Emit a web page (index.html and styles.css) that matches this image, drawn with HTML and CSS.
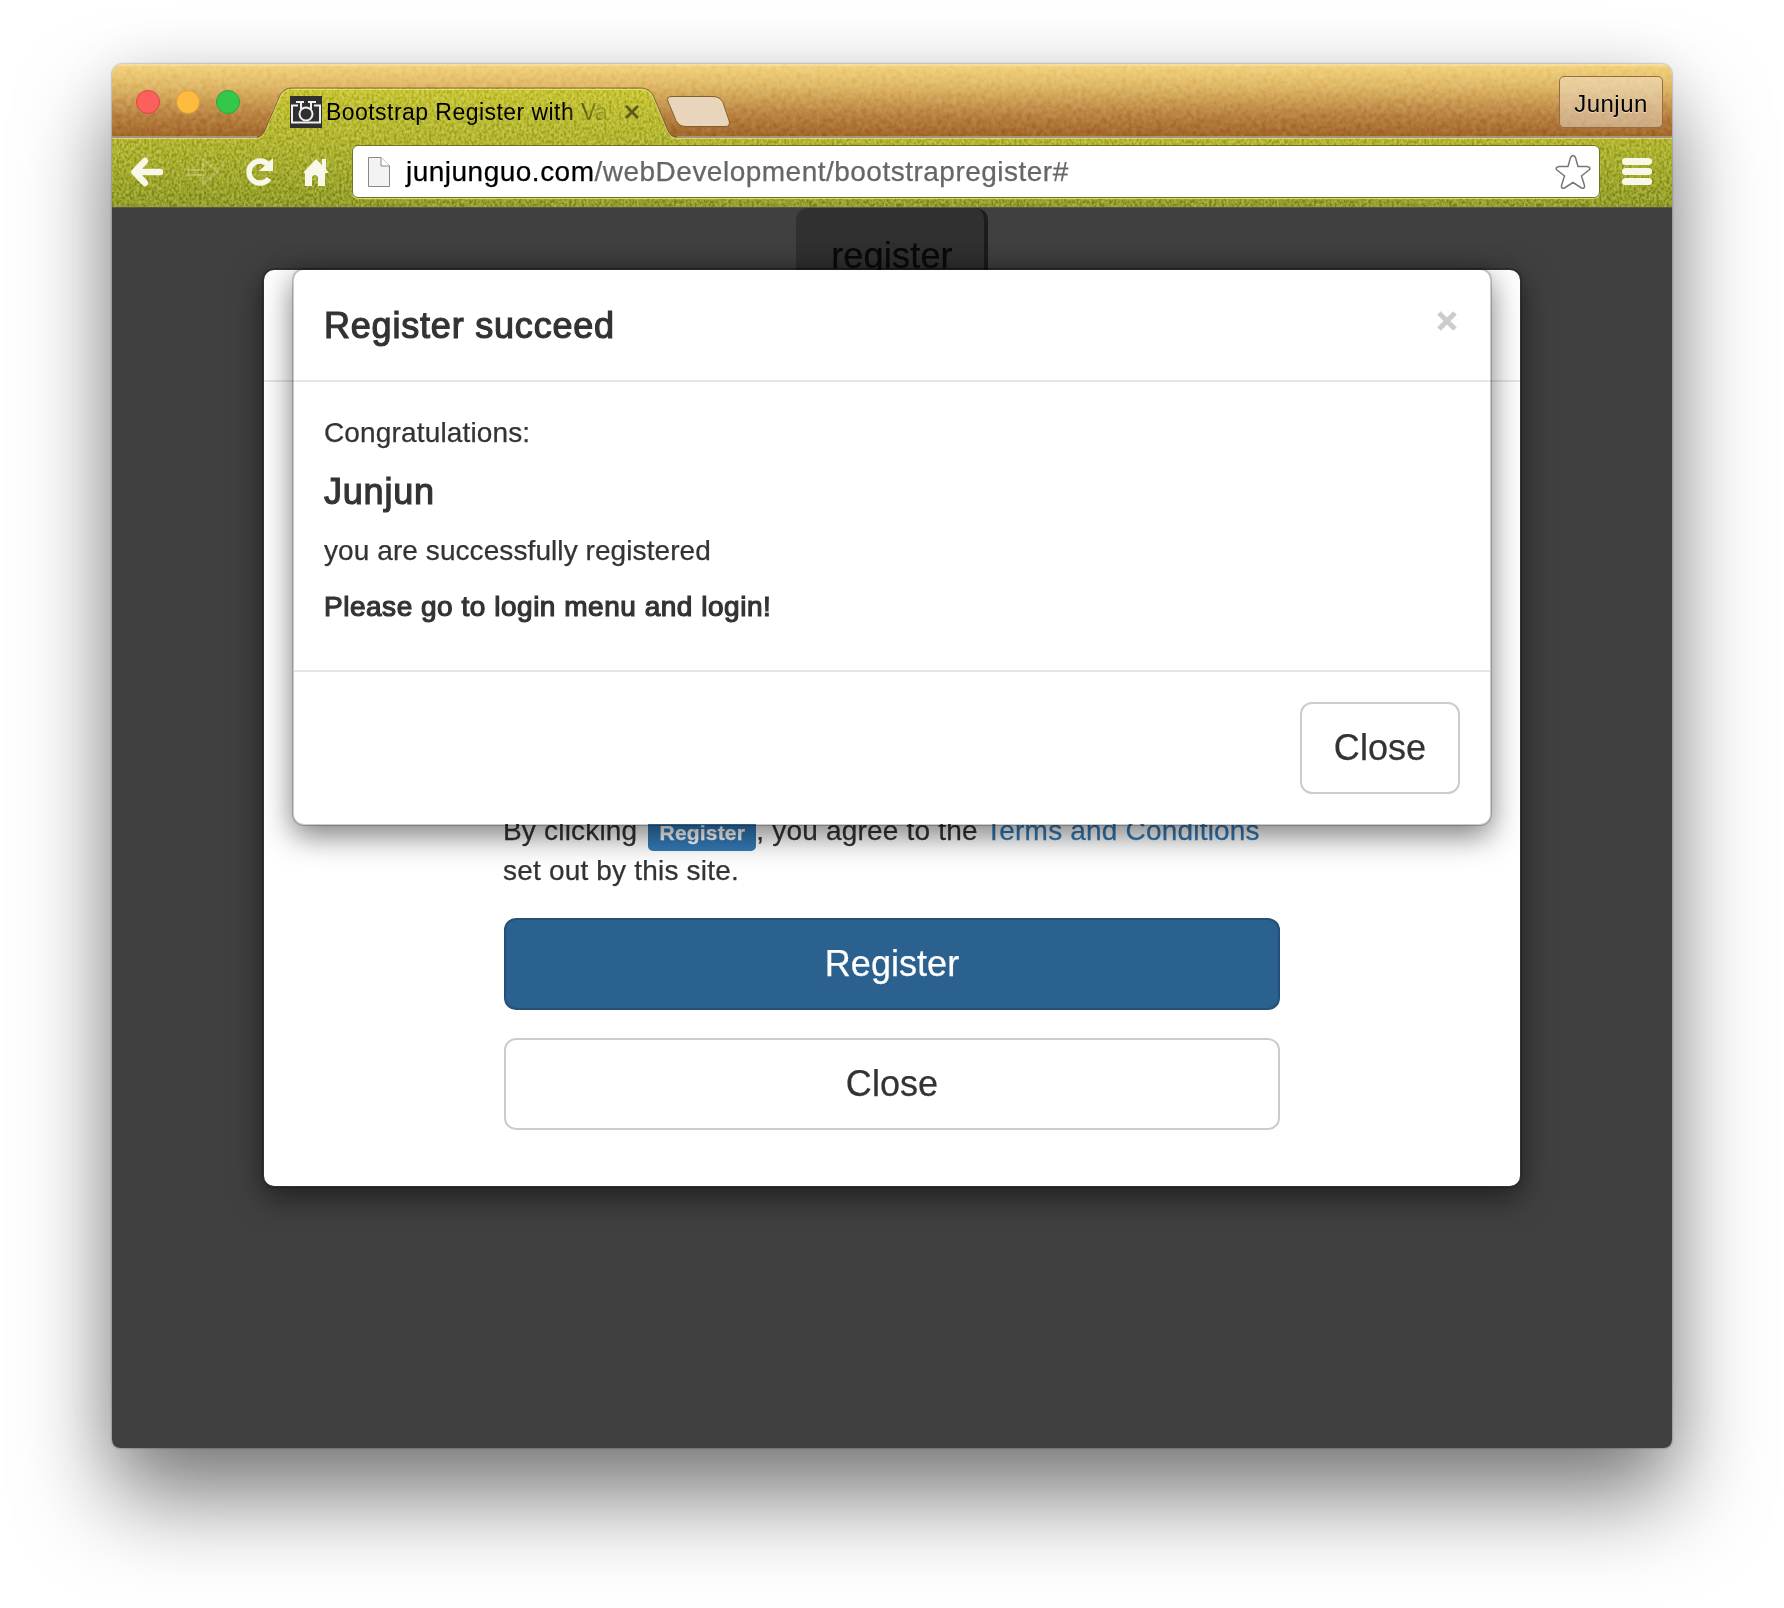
FILE: index.html
```
<!DOCTYPE html>
<html lang="en">
<head>
<meta charset="utf-8">
<title>Bootstrap Register with Validation</title>
<link rel="stylesheet" href="styles.css">
</head>
<body>
<div class="window">
  <header class="chrome">
    <svg class="chrome-skin" width="1560" height="143" viewBox="0 0 1560 143">
      <defs>
        <linearGradient id="wood" x1="0" y1="0" x2="0" y2="1"><stop offset="0" stop-color="#f4d47f"/><stop offset=".3" stop-color="#dfb867"/><stop offset=".7" stop-color="#b88140"/><stop offset="1" stop-color="#a06528"/></linearGradient>
        <linearGradient id="grass" x1="0" y1="20" x2="0" y2="143" gradientUnits="userSpaceOnUse"><stop offset="0" stop-color="#cac634"/><stop offset=".5" stop-color="#b0b42f"/><stop offset="1" stop-color="#929d27"/></linearGradient>
        <filter id="grain" x="0" y="0" width="100%" height="100%" color-interpolation-filters="sRGB"><feTurbulence type="fractalNoise" baseFrequency=".4 .3" numOctaves="2" seed="4"/><feColorMatrix values="2.2 0 0 0 -.6  2.2 0 0 0 -.6  2.2 0 0 0 -.6  0 0 0 0 1"/></filter>
        <filter id="fineGrain" x="0" y="0" width="100%" height="100%" color-interpolation-filters="sRGB"><feTurbulence type="fractalNoise" baseFrequency=".2" numOctaves="2" seed="9"/><feColorMatrix values="1.4 0 0 0 -.2  1.4 0 0 0 -.2  1.4 0 0 0 -.2  0 0 0 0 1"/></filter>
        <clipPath id="grassShape"><path d="M0 74H144Q150 74 153 67L168 32Q172 24 180 24H529Q537 24 541 32L556 68Q559 74 566 74H1560V143H0Z"/></clipPath>
      </defs>
      <rect width="1560" height="74" fill="url(#wood)"/>
      <rect class="grain-wood" width="1560" height="74" filter="url(#fineGrain)"/>
      <path d="M0 1H1560" stroke="#fbe9b4" stroke-width="1"/>
      <g clip-path="url(#grassShape)">
        <rect width="1560" height="143" fill="url(#grass)"/>
        <rect class="grain-grass" width="1560" height="143" filter="url(#grain)"/>
      </g>
      <path d="M0 74.500H144Q150 74.500 153 67.500L168 33Q172 25.500 180 25.500H529Q537 25.500 541 33L556 68.500Q559 74.500 566 74.500H1560" fill="none" stroke="#e9e6a0" stroke-opacity=".7"/>
      <path d="M144 73Q150 73 153 66.500L168 31Q172 24 180 24H529Q537 24 541 31L556 67Q559 73 566 73" fill="none" stroke="#6f5a20" stroke-opacity=".75"/>
      <path d="M0 73H145M565 73H1560" stroke="#a9a58c" stroke-width="1.500"/>
      <path d="M560 33H601Q608 33 611 39L617 57Q619 63 613 63H574Q567 63 564 57L556 38Q554 33 560 33Z" transform="translate(0 -.5)" fill="#e9d5bb" stroke="#80602e"/>
    </svg>
    <div class="titlebar">
      <div class="lights"><i class="light red"></i><i class="light amber"></i><i class="light green"></i></div>
      <div class="tab">
        <svg class="favicon" width="32" height="32" viewBox="0 0 32 32"><path fill="#303030" d="M0 0H32V32H0Z"/><g fill="none" stroke="#f1f1f1" stroke-width="2"><path d="M8 9.500H2V26.500H30V9.500H24M6 6H14M18 6H26M11 6V13M21 6V13"/><circle cx="16" cy="18" r="6.500"/></g></svg>
        <span class="tab-title">Bootstrap Register with Vali</span>
        <svg class="tab-close" width="14" height="14" viewBox="0 0 14 14"><path d="M1 1L13 13M13 1L1 13" stroke="#58581f" stroke-width="2.600"/></svg>
      </div>
      <div class="profile">Junjun</div>
    </div>
    <nav class="toolbar">
      <svg class="tools" width="240" height="54" viewBox="0 0 240 54">
        <g fill="none" stroke="#f8f8e9">
          <path d="M33 16L22.500 27L33 38M23 27H48" stroke-width="6.500" stroke-linecap="round" stroke-linejoin="round"/>
          <path d="M77 25H91V15L106 27L91 39V30H77Z" opacity=".25" stroke-width="2"/>
          <path d="M156 19.500A11 11 0 1 0 157 33.500" stroke-width="5.500"/>
        </g>
        <g fill="#f8f8e9"><path d="M161 13V26H147Z"/><path d="M191 28L204 14L210 20V14H214V24L217 28H213V41H206V32Q203 28 200 32V41H193V28Z"/></g>
      </svg>
      <div class="address">
        <svg width="24" height="32" viewBox="0 0 24 32"><path d="M1.500 1.500H14L22.500 10V30.500H1.500Z" fill="#f3f3f3" stroke="#888"/><path d="M14 1.500V10H22.500" fill="#fff" stroke="#888"/></svg>
        <span class="url"><b>junjunguo.com</b>/webDevelopment/bootstrapregister#</span>
        <svg class="star" width="36" height="36" viewBox="0 0 36 36"><path d="M15.500 3.500Q18 -.5 20.500 3.500L23 12.500H32Q36.500 13.500 34 16L26.500 22L29.500 31.500Q30 35 26.500 34L18 28.500L9.500 34Q6 35 6.500 31.500L9.500 22L2 16Q-.5 13.500 4 12.500H13Z" fill="#fff" stroke="#777" stroke-width="1.500"/></svg>
      </div>
      <div class="menu"><i></i><i></i><i></i></div>
    </nav>
  </header>
  <main class="page">
    <div class="page-button">register</div>
    <section class="modal register-modal">
      <div class="modal-header"></div>
      <div class="register-form">
        <p class="terms">By clicking <span class="label">Register</span>, you agree to the <a>Terms and Conditions</a><br>set out by this site.</p>
        <div class="btn primary">Register</div>
        <div class="btn">Close</div>
      </div>
    </section>
    <section class="modal success-modal">
      <div class="modal-header"><h4>Register succeed</h4>
        <svg width="20" height="20" viewBox="0 0 20 20"><path d="M2 2L18 18M18 2L2 18" stroke="#ccc" stroke-width="5"/></svg>
      </div>
      <div class="modal-body">
        <p class="congrats">Congratulations:</p>
        <h4 class="name">Junjun</h4>
        <p class="message">you are successfully registered</p>
        <h5>Please go to login menu and login!</h5>
      </div>
      <div class="modal-footer"><div class="btn">Close</div></div>
    </section>
  </main>
</div>
</body>
</html>
```
FILE: styles.css
```
* { box-sizing: border-box; }
body { margin: 0; width: 1784px; height: 1608px; overflow: hidden; padding: 64px 112px; background: #fff; color: #333; font: 28px/40px "Liberation Sans", Arial, sans-serif; -webkit-text-stroke-width: .25px; }
p, h4, h5 { margin: 0; }
.window { width: 1560px; height: 1384px; border-radius: 10px 10px 8px 8px; box-shadow: 0 0 2px rgba(0,0,0,.55), 0 50px 90px rgba(0,0,0,.5), 0 4px 60px rgba(0,0,0,.09); }
.chrome { position: relative; height: 143px; border-radius: 10px 10px 0 0; overflow: hidden; }
.chrome-skin { position: absolute; inset: 0; }
.grain-wood { opacity: .26; mix-blend-mode: soft-light; }
.grain-grass { opacity: .5; mix-blend-mode: soft-light; }
.titlebar { position: relative; height: 73px; display: flex; align-items: flex-start; }
.lights { display: flex; gap: 16px; padding: 26px 0 0 24px; width: 178px; }
.light { width: 24px; height: 24px; border-radius: 50%; border: 1px solid; }
.red { background: #fc605c; border-color: #de4544; }
.amber { background: #fdbc40; border-color: #dfa033; }
.green { background: #34c84a; border-color: #27aa35; }
.tab { display: flex; align-items: center; height: 32px; margin-top: 32px; }
.favicon { flex: none; }
.tab-title { width: 285px; margin-left: 4px; overflow: hidden; white-space: nowrap; font-size: 23px; letter-spacing: .45px; color: transparent; -webkit-text-stroke-width: 0; background: linear-gradient(90deg, #000 238px, rgba(0,0,0,.6) 252px, rgba(0,0,0,.05) 285px); background-clip: text; -webkit-background-clip: text; }
.tab-close { margin-left: 14px; }
.profile { margin: 12px 9px 0 auto; width: 104px; height: 52px; border: 1px solid #92703f; border-radius: 5px; background: rgba(240,225,205,.5); color: #000; font-size: 24px; line-height: 54px; text-align: center; letter-spacing: .5px; text-shadow: 0 1px 1px #fff8; -webkit-text-stroke-width: 0; }
.toolbar { position: relative; height: 70px; padding-top: 8px; display: flex; }
.tools { flex: none; }
.address { width: 1248px; height: 53px; border: 1px solid #707620; border-radius: 6px; background: #fff; display: flex; align-items: center; padding: 0 8px 0 14px; box-shadow: 0 1px 1px #dddf80; }
.url { margin-left: 15px; font-size: 28px; letter-spacing: .49px; color: #666; }
.url b { font-weight: 400; color: #000; }
.star { margin-left: auto; }
.menu { display: grid; gap: 3px; align-content: start; margin: 13px 0 0 22px; }
.menu i { width: 30px; height: 7px; border-radius: 4px; background: #f8f8e9; }
.page { display: grid; grid-template-columns: 150px 1260px 150px; grid-template-rows: 60px 1180px; height: 1241px; background: #404040; border-top: 1px solid #555; border-radius: 0 0 8px 8px; overflow: hidden; }
.page-button { grid-area: 1 / 2; justify-self: center; width: 192px; height: 80px; border-radius: 12px 12px 0 0; border-right: 4px solid #1c1c1c; padding-left: 4px; background: #303030; color: #0a0a0a; font-size: 36px; line-height: 96px; text-align: center; letter-spacing: .2px; }
.modal { grid-area: 2 / 2; border: 2px solid rgba(0,0,0,.2); border-radius: 12px; background: #fff; background-clip: padding-box; box-shadow: 0 10px 30px rgba(0,0,0,.5); }
.register-modal { height: 920px; z-index: 1; }
.success-modal { justify-self: center; z-index: 2; width: 1200px; height: 558px; }
.modal-header { height: 112px; padding: 30px; display: flex; justify-content: space-between; border-bottom: 2px solid #e5e5e5; }
.modal-header svg { margin: 11px 3px 0 0; }
h4, h5 { font-weight: 400; -webkit-text-stroke: 1.2px #333; }
h4 { font-size: 36px; line-height: 52px; letter-spacing: .8px; }
.modal-body { height: 290px; padding: 31px 30px 0; display: grid; align-content: start; gap: 20px; border-bottom: 2px solid #e5e5e5; }
.congrats { letter-spacing: .15px; }
.message { letter-spacing: .08px; }
.name { line-height: 38px; }
h5 { font-size: 28px; line-height: 31px; letter-spacing: .52px; }
.modal-footer { padding: 30px; display: flex; justify-content: flex-end; }
.btn { height: 92px; border: 2px solid #ccc; border-radius: 12px; background: #fff; color: #333; font-size: 36px; line-height: 88px; text-align: center; letter-spacing: .05px; }
.modal-footer .btn { width: 160px; }
.register-form { width: 776px; margin: 429px auto 0; display: grid; }
.terms { white-space: nowrap; margin: 0 0 27px -1px; letter-spacing: .19px; }
.terms a { color: #337ab7; }
.label { display: inline-block; height: 32px; line-height: 28px; width: 108px; margin: 0 0 -6px 3px; border-radius: 5px; background: #337ab7; color: #fff; font-size: 21px; font-weight: 700; text-align: center; vertical-align: baseline; }
.register-form .primary { background: #2b618f; border-color: #225079; color: #fff; margin-bottom: 28px; }
```
